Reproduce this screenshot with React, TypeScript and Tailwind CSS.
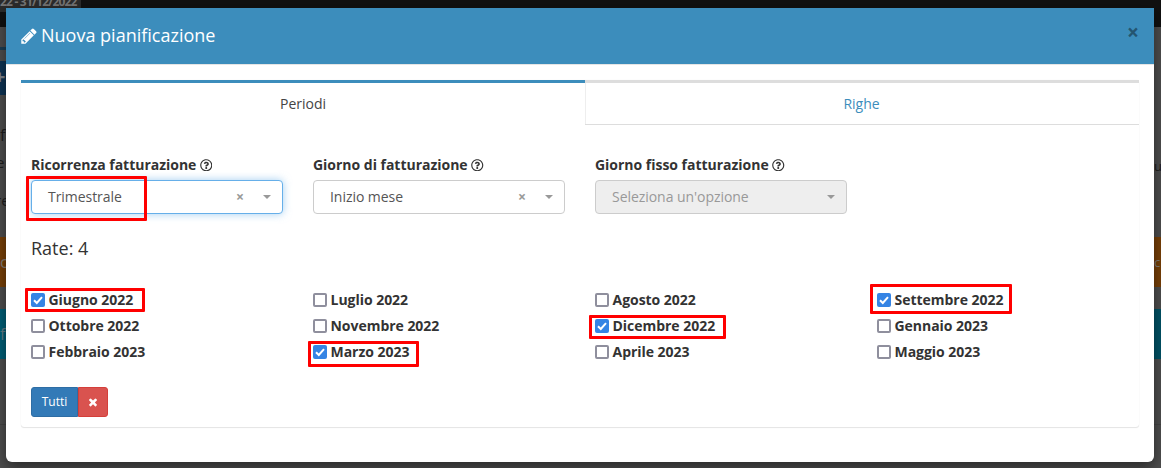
import React from "react";
import { FaRegQuestionCircle } from "react-icons/fa";

const PENCIL =
  "M491 1536l91-91-235-235-91 91v107h128v128h107zm523-928q0-22-22-22-10 0-17 7l-542 542q-7 7-7 17 0 22 22 22 10 0 17-7l542-542q7-7 7-17zm-54-192l416 416-832 832h-416v-416zm683 96q0 53-37 90l-166 166-416-416 166-165q36-38 90-38 53 0 91 38l235 234q37 39 37 91z";
const TIMES =
  "M1490 1322q0 40-28 68l-136 136q-28 28-68 28t-68-28l-294-294-294 294q-28 28-68 28t-68-28l-136-136q-28-28-28-68t28-68l294-294-294-294q-28-28-28-68t28-68l136-136q28-28 68-28t68 28l294 294 294-294q28-28 68-28t68 28l136 136q28 28 28 68t-28 68l-294 294 294 294q28 28 28 68z";

type SelectProps = {
  label: string;
  value: string;
  focused?: boolean;
  disabled?: boolean;
  mark?: string;
};

function Select({ label, value, focused, disabled, mark }: SelectProps) {
  const look = focused
    ? "border-[#66afe9] shadow-[0_0_8px_rgba(102,175,233,0.6)] bg-white text-[#555]"
    : disabled
      ? "border-[#ccc] bg-[#eee] text-[#999]"
      : "border-[#ccc] bg-white text-[#555]";
  return (
    <div className="w-[282px]">
      <div className="flex h-5 items-center gap-[3.5px] font-bold tracking-[-0.02px]">
        <span>{label}</span>
        <FaRegQuestionCircle className="size-[12.5px]" />
      </div>
      <div className={`relative mt-[5px] flex h-[34px] w-[252px] items-center rounded border pr-[11px] pl-4 tracking-[-0.05px] ${look}`}>
        <span className="flex-1">{value}</span>
        {!disabled && <span className="mr-[19px] text-sm font-bold text-[#999]">×</span>}
        <span className="border-x-4 border-t-4 border-x-transparent border-t-[#999]" />
        {mark && <Mark place={mark} />}
      </div>
    </div>
  );
}

function Mark({ place }: { place: string }) {
  return <span className={`pointer-events-none absolute rounded-[1px] border-[3px] border-[#ff0000] ${place}`} />;
}

function Check({ label, checked, mark }: { label: string; checked?: boolean; mark?: string }) {
  return (
    <label className="relative flex h-[26px] w-[282px] items-center gap-[3.5px] font-bold tracking-[-0.03px]">
      {checked ? (
        <svg viewBox="0 0 14 14" className="size-3.5">
          <rect width="14" height="14" rx="2" fill="#3584e4" />
          <path d="M3 7.2l2.8 2.8L11 4.2" fill="none" stroke="#fff" strokeWidth="2" />
        </svg>
      ) : (
        <span className="size-3.5 rounded-[2px] border-2 border-[#8f8f9d] bg-white" />
      )}
      <span>{label}</span>
      {mark && <Mark place={mark} />}
    </label>
  );
}

const months = [
  { label: "Giugno 2022", checked: true, mark: "-left-[6px] top-[1px] h-[24px] w-[120px]" },
  { label: "Luglio 2022" },
  { label: "Agosto 2022" },
  { label: "Settembre 2022", checked: true, mark: "-left-[7px] -top-[3px] h-[30px] w-[142px]" },
  { label: "Ottobre 2022" },
  { label: "Novembre 2022" },
  { label: "Dicembre 2022", checked: true, mark: "-left-[6px] top-[2px] h-[24px] w-[137px]" },
  { label: "Gennaio 2023" },
  { label: "Febbraio 2023" },
  { label: "Marzo 2023", checked: true, mark: "-left-[5px] top-[2px] h-[26px] w-[111px]" },
  { label: "Aprile 2023" },
  { label: "Maggio 2023" },
];

function Backdrop() {
  return (
    <div className="h-full w-full bg-[#4f4f4f] text-[#1d1d1d]">
      <div className="h-[27px] bg-[#111]">
        <div className="h-3 w-[81px] bg-[#2c2c2c] text-[12px] leading-[4px] font-bold tracking-[-0.8px] whitespace-nowrap text-[#777]">
          22 - 31/12/2022
        </div>
      </div>
      <div className="flex justify-between">
        <div className="w-10">
          <div className="mt-5 h-[3px] bg-[#1c3f55]" />
          <div className="mt-[11px] h-[34px] bg-[#0e3556] text-[20px] leading-[32px] font-bold text-[#80878e]">
            <span className="-ml-[6px]">+</span>
          </div>
          <div className="mt-[30px] h-[27px] text-[16px] leading-5">fa</div>
          <div className="-ml-[4px] h-[38px] text-[15px] leading-5">e</div>
          <div className="-ml-[5px] h-[47px] text-[15px] leading-5">re</div>
          <div className="h-[50px] bg-[#7a4107] text-[16px] leading-[50px] text-[#85807b]">c</div>
          <div className="mt-[22px] h-[50px] bg-[#006179] text-[16px] leading-[50px] text-[#668089]">f</div>
          <div className="mt-[65px] h-px bg-[#454545]" />
        </div>
        <div className="w-[7px]">
          <div className="mt-[129px] h-[81px] text-[13px] leading-5">u</div>
          <div className="h-[50px] bg-[#7a4107] text-[13px] leading-[50px] text-[#85807b]">c</div>
          <div className="mt-[22px] h-[50px] bg-[#005468]" />
          <div className="mt-[65px] h-px bg-[#454545]" />
        </div>
      </div>
    </div>
  );
}

export default function App() {
  return (
    <div className="relative h-[468px] w-[1161px] overflow-hidden font-['Open_Sans',sans-serif] text-sm leading-5 text-[#333]">
      <Backdrop />
      <div className="absolute inset-0 pt-2 pl-1.5">
        <div className="h-[454px] w-[1148px] rounded-b-md bg-white shadow-[0_5px_15px_rgba(0,0,0,0.5)]">
          <header className="flex h-[57px] items-start justify-between border-b border-[#e5e5e5] bg-[#3c8dbc] pr-[15px] pl-[15px]">
            <h4 className="flex items-center gap-1 pt-[15px] text-[18px] leading-[25px] text-white">
              <svg viewBox="128 0 1536 1792" fill="currentColor" className="h-[18px] w-4">
                <path d={PENCIL} />
              </svg>
              Nuova pianificazione
            </h4>
            <button className="mt-3.5 text-[21px] leading-5 font-bold text-[#245571]">×</button>
          </header>
          <main className="px-[15px] pt-[15px]">
            <section className="h-[347px] rounded-[3px] shadow-[0_1px_1px_rgba(0,0,0,0.1),0_0_1px_rgba(0,0,0,0.1)]">
              <nav className="flex h-[45px] text-center">
                <a className="w-[564px] border-t-[3px] border-[#3c8dbc] pt-[11px] text-[#444]">Periodi</a>
                <a className="flex-1 border-t-[3px] border-b border-[#ddd] pt-[11px] pr-px text-[#3c8dbc] shadow-[inset_1px_0_0_#eee]">Righe</a>
              </nav>
              <div className="px-2.5 pt-[30px]">
                <div className="flex">
                  <Select label="Ricorrenza fatturazione" value="Trimestrale" focused mark="-left-[6px] -top-[5px] h-[45px] w-[121px]" />
                  <Select label="Giorno di fatturazione" value="Inizio mese" />
                  <Select label="Giorno fisso fatturazione" value="Seleziona un'opzione" disabled />
                </div>
                <h4 className="mt-[22px] text-[18px] leading-[25px]">Rate: 4</h4>
                <div className="mt-[26px] grid grid-cols-[repeat(4,282px)]">
                  {months.map((m) => (
                    <Check key={m.label} {...m} />
                  ))}
                </div>
                <div className="mt-[22px] flex h-[30px] text-[12px] text-white">
                  <button className="w-[47px] rounded-l-[3px] border border-[#2e6da4] bg-[#337ab7]">Tutti</button>
                  <button className="flex w-[30px] items-center justify-center rounded-r-[3px] border border-[#d43f3a] bg-[#d9534f]">
                    <svg viewBox="0 0 1792 1792" fill="currentColor" className="size-3">
                      <path d={TIMES} />
                    </svg>
                  </button>
                </div>
              </div>
            </section>
          </main>
        </div>
      </div>
    </div>
  );
}
